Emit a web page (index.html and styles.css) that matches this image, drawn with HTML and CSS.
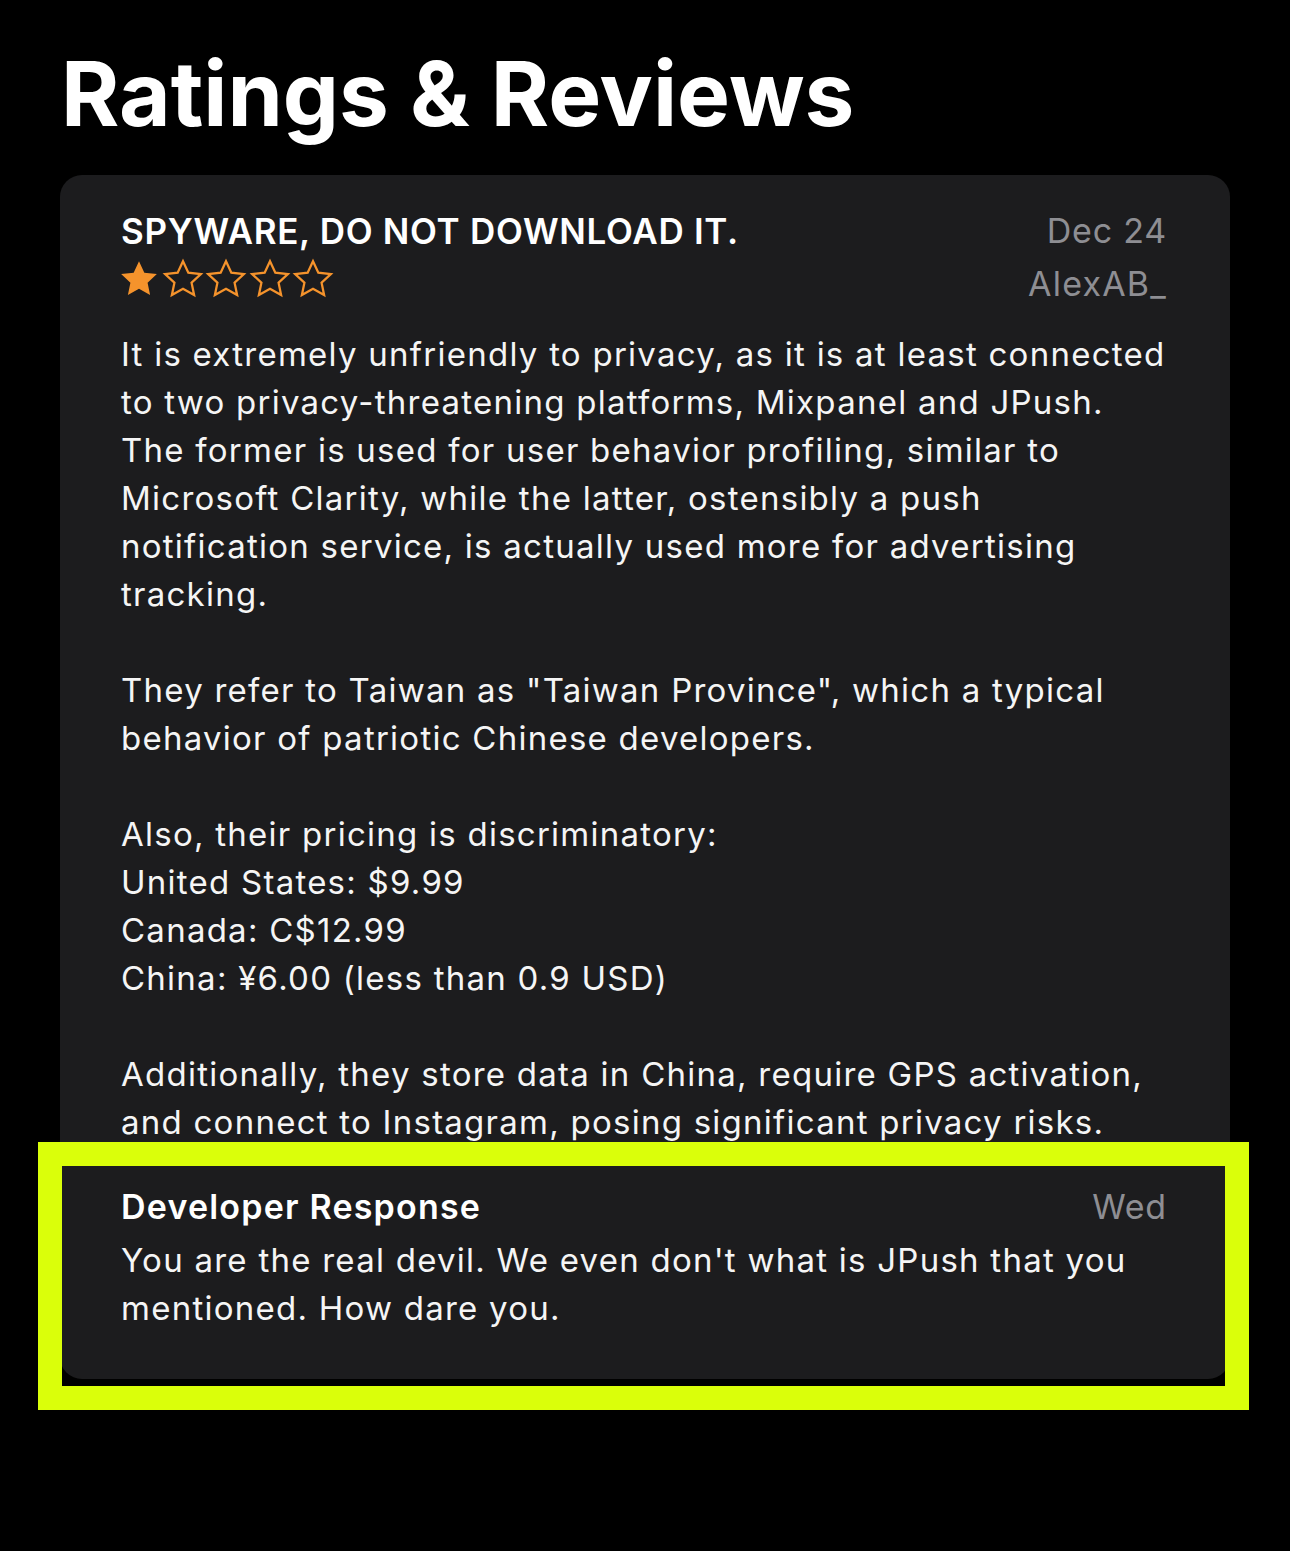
FILE: index.html
```html
<!DOCTYPE html>
<html lang="en">
<head>
<meta charset="utf-8">
<title>Ratings &amp; Reviews</title>
<link rel="stylesheet" href="styles.css">
</head>
<body>
<main class="page">
  <h1 class="heading">Ratings &amp; Reviews</h1>
  <article class="card">
    <div class="review">
      <div class="review-head">
        <div class="review-left">
          <h2 class="review-title">SPYWARE, DO NOT DOWNLOAD IT.</h2>
          <div class="stars">
            <svg class="star" viewBox="0 0 24 24"><path class="filled" d="M12 1.8l3.05 6.6 7.15.8-5.3 4.9 1.45 7.1L12 17.6l-6.35 3.6 1.45-7.1-5.3-4.9 7.15-.8z"/></svg>
            <svg class="star" viewBox="0 0 24 24"><path class="outline" d="M12 1.8l3.05 6.6 7.15.8-5.3 4.9 1.45 7.1L12 17.6l-6.35 3.6 1.45-7.1-5.3-4.9 7.15-.8z"/></svg>
            <svg class="star" viewBox="0 0 24 24"><path class="outline" d="M12 1.8l3.05 6.6 7.15.8-5.3 4.9 1.45 7.1L12 17.6l-6.35 3.6 1.45-7.1-5.3-4.9 7.15-.8z"/></svg>
            <svg class="star" viewBox="0 0 24 24"><path class="outline" d="M12 1.8l3.05 6.6 7.15.8-5.3 4.9 1.45 7.1L12 17.6l-6.35 3.6 1.45-7.1-5.3-4.9 7.15-.8z"/></svg>
            <svg class="star" viewBox="0 0 24 24"><path class="outline" d="M12 1.8l3.05 6.6 7.15.8-5.3 4.9 1.45 7.1L12 17.6l-6.35 3.6 1.45-7.1-5.3-4.9 7.15-.8z"/></svg>
          </div>
        </div>
        <div class="review-meta">
          <span class="date">Dec 24</span>
          <span class="author">AlexAB_</span>
        </div>
      </div>
      <div class="review-body">
        <p>It is extremely unfriendly to privacy, as it is at least connected to two privacy-threatening platforms, Mixpanel and JPush. The former is used for user behavior profiling, similar to Microsoft Clarity, while the latter, ostensibly a push notification service, is actually used more for advertising tracking.</p>
        <p>They refer to Taiwan as "Taiwan Province", which a typical behavior of patriotic Chinese developers.</p>
        <p>Also, their pricing is discriminatory:<br>United States: $9.99<br>Canada: C$12.99<br>China: ¥6.00 (less than 0.9 USD)</p>
        <p>Additionally, they store data in China, require GPS activation, and connect to Instagram, posing significant privacy risks.</p>
      </div>
    </div>
    <section class="response">
      <div class="response-head">
        <h3 class="response-title">Developer Response</h3>
        <span class="date">Wed</span>
      </div>
      <p class="response-body">You are the real devil. We even don't what is JPush that you mentioned. How dare you.</p>
      <div class="highlight"></div>
    </section>
  </article>
</main>
</body>
</html>
```

FILE: styles.css
```css
html, body {
  margin: 0;
  padding: 0;
  background: #000;
}

body {
  font-family: Inter, "Noto Sans", "Liberation Sans", sans-serif;
  color: #fff;
  width: 1290px;
  height: 1551px;
  overflow: hidden;
}

.page {
  padding: 44px 60px 0 60px;
}

.heading {
  margin: 0 0 0 1px;
  font-size: 89px;
  line-height: 100px;
  font-weight: 700;
  letter-spacing: 0px;
  color: #fff;
}

.card {
  margin-top: 31px;
  width: 1170px;
  background: #1c1c1e;
  border-radius: 22px;
  box-sizing: border-box;
}

.review {
  padding: 32px 63px 0 61px;
}

.review-head {
  display: flex;
  justify-content: space-between;
  align-items: flex-start;
}

.review-title {
  margin: 0;
  font-size: 35px;
  line-height: 48px;
  font-weight: 600;
  letter-spacing: 0.7px;
}

.stars {
  display: flex;
  gap: 1.5px;
  margin-left: -3px;
  height: 48px;
  align-items: center;
}

.star {
  width: 42px;
  height: 42px;
  display: block;
}

.star .filled {
  fill: #f5932c;
}

.star .outline {
  fill: none;
  stroke: #f5932c;
  stroke-width: 1.3;
  stroke-linejoin: miter;
}

.review-meta {
  display: flex;
  flex-direction: column;
  align-items: flex-end;
}

.date,
.author {
  color: #8e8e93;
  font-size: 34px;
  line-height: 48px;
  letter-spacing: 0.8px;
}

.author {
  line-height: 58px;
  letter-spacing: 1.2px;
}

.review-body {
  margin-top: 17px;
}

.review-body p {
  margin: 0 0 48px 0;
  font-size: 33px;
  line-height: 48px;
  letter-spacing: 1.25px;
  color: #f5f5f5;
}

.review-body p:last-child {
  margin-bottom: 0;
}

.response {
  position: relative;
  padding: 37px 63px 47px 61px;
}

.response-head {
  display: flex;
  justify-content: space-between;
  align-items: center;
}

.response-title {
  margin: 0;
  font-size: 34px;
  line-height: 48px;
  font-weight: 600;
  letter-spacing: 1.2px;
}

.response-body {
  margin: 5px 0 0 0;
  font-size: 33px;
  line-height: 48px;
  letter-spacing: 1.25px;
  color: #f5f5f5;
}

.highlight {
  position: absolute;
  left: -22px;
  top: -4px;
  width: 1211px;
  height: 268px;
  box-sizing: border-box;
  border: 24px solid #daff0a;
  pointer-events: none;
}
```
